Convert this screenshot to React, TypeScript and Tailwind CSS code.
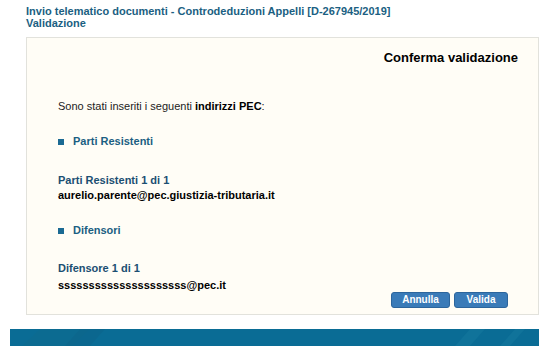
export default function App() {
  const font = { fontFamily: '"Liberation Sans", Arial, sans-serif' };

  return (
    <div className="w-[553px] h-[360px] bg-white relative overflow-hidden" style={font}>
      <div className="pl-[26px] pt-[5px] text-[11px] leading-[12px] font-bold text-[#1b5f82]">
        <div>Invio telematico documenti - Controdeduzioni Appelli [D-267945/2019]</div>
        <div>Validazione</div>
      </div>

      {/* main box */}
      <div className="ml-[26px] mt-[8px] w-[513px] h-[278px] border border-[#e2e2dc] bg-[#fffdf6] flex flex-col">
        <div className="flex justify-end pr-[20px] pt-[12px]">
          <span className="text-[13px] leading-[16px] font-bold text-black">
            Conferma validazione
          </span>
        </div>

        <div className="pl-[31px] pt-[34px] text-[11px] leading-[13px]">
          <p className="text-[#222]">
            Sono stati inseriti i seguenti <b className="text-black">indirizzi PEC</b>:
          </p>

          <div className="flex items-center gap-[9px] mt-[22px] text-[#1b5f82] font-bold">
            <span className="w-[6px] h-[6px] bg-[#1b6a93]" />
            <span>Parti Resistenti</span>
          </div>

          <p className="mt-[26px] font-bold text-[#1b4f72]">Parti Resistenti 1 di 1</p>
          <p className="mt-[2px] font-bold text-black">aurelio.parente@pec.giustizia-tributaria.it</p>

          <div className="flex items-center gap-[9px] mt-[22px] text-[#1b5f82] font-bold">
            <span className="w-[6px] h-[6px] bg-[#1b6a93]" />
            <span>Difensori</span>
          </div>

          <p className="mt-[25px] font-bold text-[#1b4f72]">Difensore 1 di 1</p>
          <p className="mt-[4px] font-bold text-black">sssssssssssssssssssss@pec.it</p>
        </div>

        <div className="flex justify-end gap-[4px] pr-[30px]">
          <button className="w-[59px] h-[16px] rounded-[3px] bg-[#3a7bb8] border border-[#2c659c] text-white text-[10px] leading-[14px] font-bold">
            Annulla
          </button>
          <button className="w-[54px] h-[16px] rounded-[3px] bg-[#3a7bb8] border border-[#2c659c] text-white text-[10px] leading-[14px] font-bold">
            Valida
          </button>
        </div>
      </div>

      {/* footer bar */}
      <div className="ml-[10px] mt-[14px] w-[529px] h-[17px] bg-[#0a6c95] relative overflow-hidden">
        <svg className="absolute inset-0" width="529" height="17">
          <polygon points="30,0 80,0 62,17 12,17" fill="#0e6a8f" opacity="0.6" />
          <polygon points="70,0 95,0 80,17 55,17" fill="#0c6288" opacity="0.4" />
          <polygon points="460,0 475,0 460,17 445,17" fill="#1579a0" opacity="0.5" />
          <polygon points="505,0 515,0 500,17 490,17" fill="#1579a0" opacity="0.5" />
        </svg>
      </div>
    </div>
  );
}
